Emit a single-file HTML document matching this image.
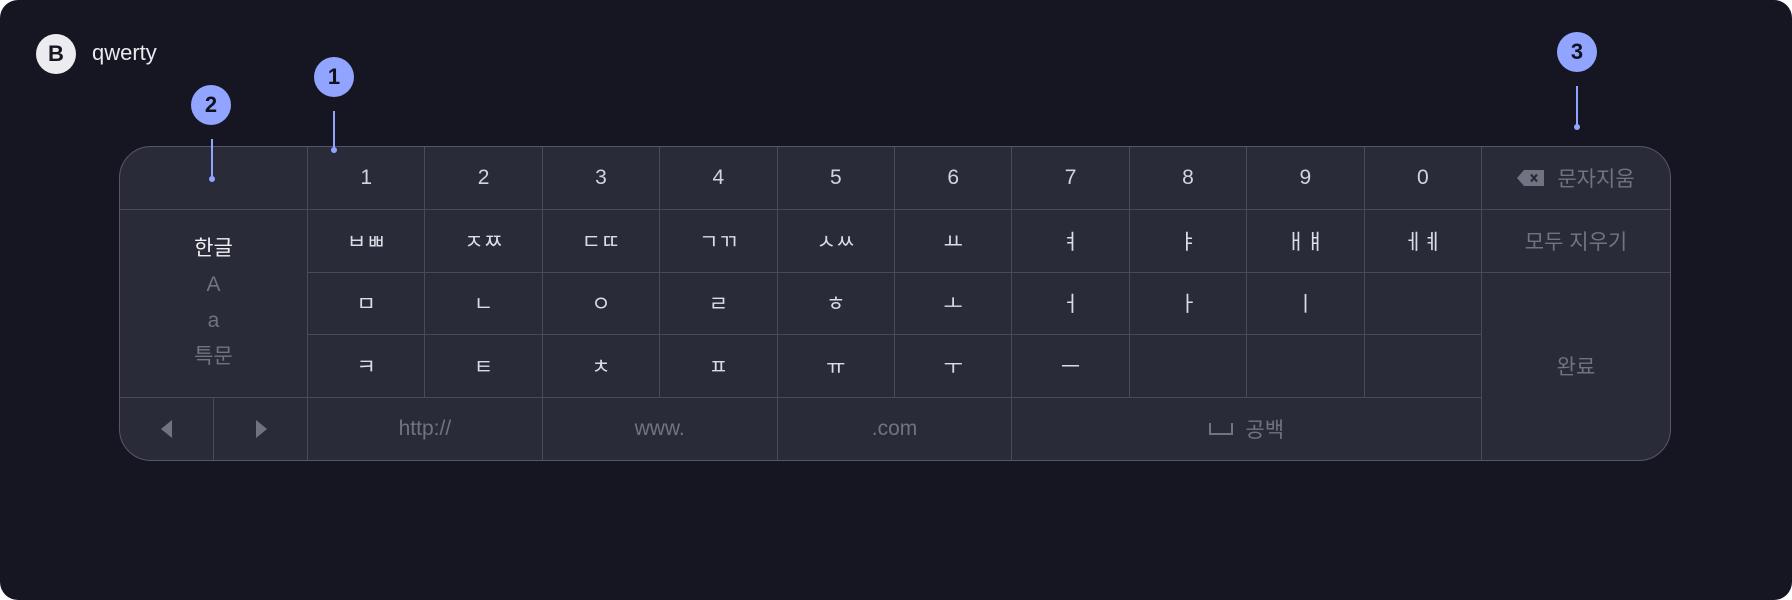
<!DOCTYPE html>
<html><head><meta charset="utf-8"><style>
html,body{margin:0;padding:0;background:#fff;}
body{width:1792px;height:600px;position:relative;overflow:hidden;font-family:"Liberation Sans","Noto Sans CJK KR",sans-serif;}
.panel{position:absolute;left:0;top:0;width:1792px;height:600px;background:#161622;border-radius:18px;}
.b{position:absolute;left:36px;top:34px;width:40px;height:40px;border-radius:50%;background:#ececf0;color:#161622;font-weight:bold;font-size:22px;line-height:40px;text-align:center;}
.title{position:absolute;left:92px;top:40px;color:#e8e8ee;font-size:22px;line-height:26px;}
.badge{position:absolute;width:40px;height:40px;border-radius:50%;background:#91a4ff;color:#10121c;font-weight:bold;font-size:22px;line-height:40px;text-align:center;}
.line{position:absolute;width:2px;background:#91a4ff;}
.dot{position:absolute;width:6px;height:6px;border-radius:50%;background:#91a4ff;}
.kb{position:absolute;left:119px;top:146px;width:1552px;height:315px;border:1px solid #55566a;box-sizing:border-box;border-radius:32px;overflow:hidden;background:#4a4b5a;display:grid;grid-template-columns:93px 93px repeat(10,1fr) 188px;grid-template-rows:repeat(5,1fr);gap:1px;}
.kb>div{background:#2a2b38;display:flex;align-items:center;justify-content:center;color:#dcdce4;font-size:21px;}
.n{font-size:21px!important;color:#d4d4dc!important;}
.g{color:#727382!important;font-size:21px!important;}
.left{grid-column:1/3;grid-row:2/5;flex-direction:column;line-height:36px;}
.left span{font-size:21px;color:#727382;}
</style></head><body>
<div class="panel"></div>
<div class="b">B</div>
<div class="title">qwerty</div>
<div class="kb">
<div style="grid-column:1/3"></div>
<div class="n">1</div><div class="n">2</div><div class="n">3</div><div class="n">4</div><div class="n">5</div><div class="n">6</div><div class="n">7</div><div class="n">8</div><div class="n">9</div><div class="n">0</div>
<div class="g"><svg width="28" height="16" viewBox="0 0 28 16" style="margin-right:12px"><path d="M7 0H27V16H7L0 8Z" fill="#727382"/><path d="M14 4.5L20 11.5M20 4.5L14 11.5" stroke="#2a2b38" stroke-width="2.2"/></svg>문자지움</div>
<div class="left"><span style="color:#f0f0f4">한글</span><span>A</span><span>a</span><span>특문</span></div>
<div>ㅂㅃ</div><div>ㅈㅉ</div><div>ㄷㄸ</div><div>ㄱㄲ</div><div>ㅅㅆ</div><div>ㅛ</div><div>ㅕ</div><div>ㅑ</div><div>ㅐㅒ</div><div>ㅔㅖ</div>
<div class="g">모두 지우기</div>
<div>ㅁ</div><div>ㄴ</div><div>ㅇ</div><div>ㄹ</div><div>ㅎ</div><div>ㅗ</div><div>ㅓ</div><div>ㅏ</div><div>ㅣ</div><div></div>
<div class="g" style="grid-column:13;grid-row:3/6">완료</div>
<div>ㅋ</div><div>ㅌ</div><div>ㅊ</div><div>ㅍ</div><div>ㅠ</div><div>ㅜ</div><div>ㅡ</div><div></div><div></div><div></div>
<div><svg width="12" height="18"><path d="M11 0V18L0 9Z" fill="#727382"/></svg></div>
<div><svg width="12" height="18"><path d="M1 0V18L12 9Z" fill="#727382"/></svg></div>
<div class="g" style="grid-column:3/5">http://</div>
<div class="g" style="grid-column:5/7">www.</div>
<div class="g" style="grid-column:7/9">.com</div>
<div class="g" style="grid-column:9/13"><svg width="24" height="12" style="margin-right:12px"><path d="M1 0V11H23V0" fill="none" stroke="#727382" stroke-width="2"/></svg>공백</div>
</div>
<div class="badge" style="left:314px;top:57px">1</div>
<div class="line" style="left:333px;top:111px;height:38px"></div>
<div class="dot" style="left:331px;top:147px"></div>
<div class="badge" style="left:191px;top:85px">2</div>
<div class="line" style="left:211px;top:139px;height:38px"></div>
<div class="dot" style="left:209px;top:176px"></div>
<div class="badge" style="left:1557px;top:32px">3</div>
<div class="line" style="left:1576px;top:86px;height:40px"></div>
<div class="dot" style="left:1574px;top:124px"></div>
</body></html>
